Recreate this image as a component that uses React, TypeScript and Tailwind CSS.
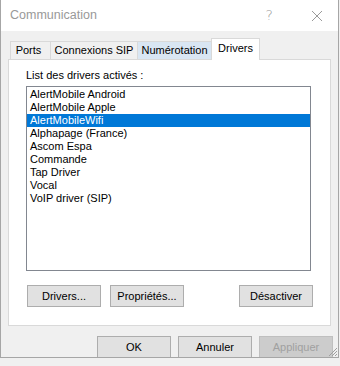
import React from "react";

const items = [
  "AlertMobile Android",
  "AlertMobile Apple",
  "AlertMobileWifi",
  "Alphapage (France)",
  "Ascom Espa",
  "Commande",
  "Tap Driver",
  "Vocal",
  "VoIP driver (SIP)",
];

function Btn({ children, disabled }: { children: React.ReactNode; disabled?: boolean }) {
  return (
    <div
      className={
        "w-[74px] h-[22px] flex items-center justify-center border shrink-0 " +
        (disabled
          ? "bg-[#cccccc] border-[#bfbfbf] text-[#a0a0a0]"
          : "bg-[#e1e1e1] border-[#adadad] text-black")
      }
    >
      {children}
    </div>
  );
}

export default function App() {
  return (
    <div className="w-[340px] h-[366px] bg-[#f0f0f0] font-['Liberation_Sans',Arial,sans-serif] text-[11px] text-black leading-[13px]">
      <div className="relative w-[339px] h-[358px] border-x border-b border-[#a6a6a6] bg-[#f0f0f0] flex flex-col overflow-hidden">
        {/* title bar */}
        <div className="h-[31px] bg-white flex items-center shrink-0">
          <span className="ml-[9px] text-[12.5px] text-[#999999]">Communication</span>
          <span className="ml-auto mr-[38px] text-[14px] text-[#999999] font-['DejaVu_Sans',sans-serif] font-light">?</span>
          <svg width="12" height="12" viewBox="0 0 12 12" className="mr-[15px]">
            <path d="M1 1 L11 11 M11 1 L1 11" stroke="#9a9a9a" strokeWidth="1" />
          </svg>
        </div>

        {/* tabs + panel */}
        <div className="pl-[7px] pt-[7px] flex flex-col">
          <div className="flex items-end h-[21px] pl-[2px]">
            <div className="h-[18px] w-[41px] border-l border-t border-r border-[#d9d9d9] flex items-center justify-center pr-[4px]">
              Ports
            </div>
            <div className="h-[18px] w-[87px] border-t border-r border-[#d9d9d9] flex items-center justify-center">
              Connexions SIP
            </div>
            <div className="h-[18px] w-[73px] border-t border-[#d9d9d9] bg-[#d9e6f3] flex items-center justify-center">
              Numérotation
            </div>
            <div className="relative z-10 -mb-px h-[22px] w-[49px] border-l border-t border-r border-[#d9d9d9] bg-white flex items-start justify-center pt-[3px]">
              Drivers
            </div>
          </div>
          <div className="w-[323px] h-[267px] border border-[#d9d9d9] bg-white flex flex-col">
            <div className="mt-[9px] ml-[17px]">List des drivers activés :</div>
            <div className="mt-[4px] ml-[17px] w-[285px] h-[185px] border border-[#828790] pt-px flex flex-col">
              {items.map((it, i) => (
                <div
                  key={it}
                  className={
                    "h-[13px] leading-[13px] pl-[3px] whitespace-nowrap " +
                    (i === 2 ? "bg-[#0078d7] text-white" : "")
                  }
                >
                  {it}
                </div>
              ))}
            </div>
            <div className="mt-[14px] ml-[18px] flex items-center">
              <Btn>Drivers...</Btn>
              <div className="ml-[9px]">
                <Btn>Propriétés...</Btn>
              </div>
              <div className="ml-[55px]">
                <Btn>Désactiver</Btn>
              </div>
            </div>
          </div>
        </div>

        {/* bottom buttons */}
        <div className="mt-[10px] ml-[96px] flex gap-[7px]">
          <Btn>OK</Btn>
          <Btn>Annuler</Btn>
          <Btn disabled>Appliquer</Btn>
        </div>

        {/* resize grip */}
        <svg width="10" height="10" viewBox="0 0 10 10" className="absolute right-0 bottom-0">
          <path d="M9 1 L1 9 M9 4 L4 9 M9 7 L7 9" stroke="#a0a0a0" strokeWidth="1" />
        </svg>
      </div>
    </div>
  );
}
